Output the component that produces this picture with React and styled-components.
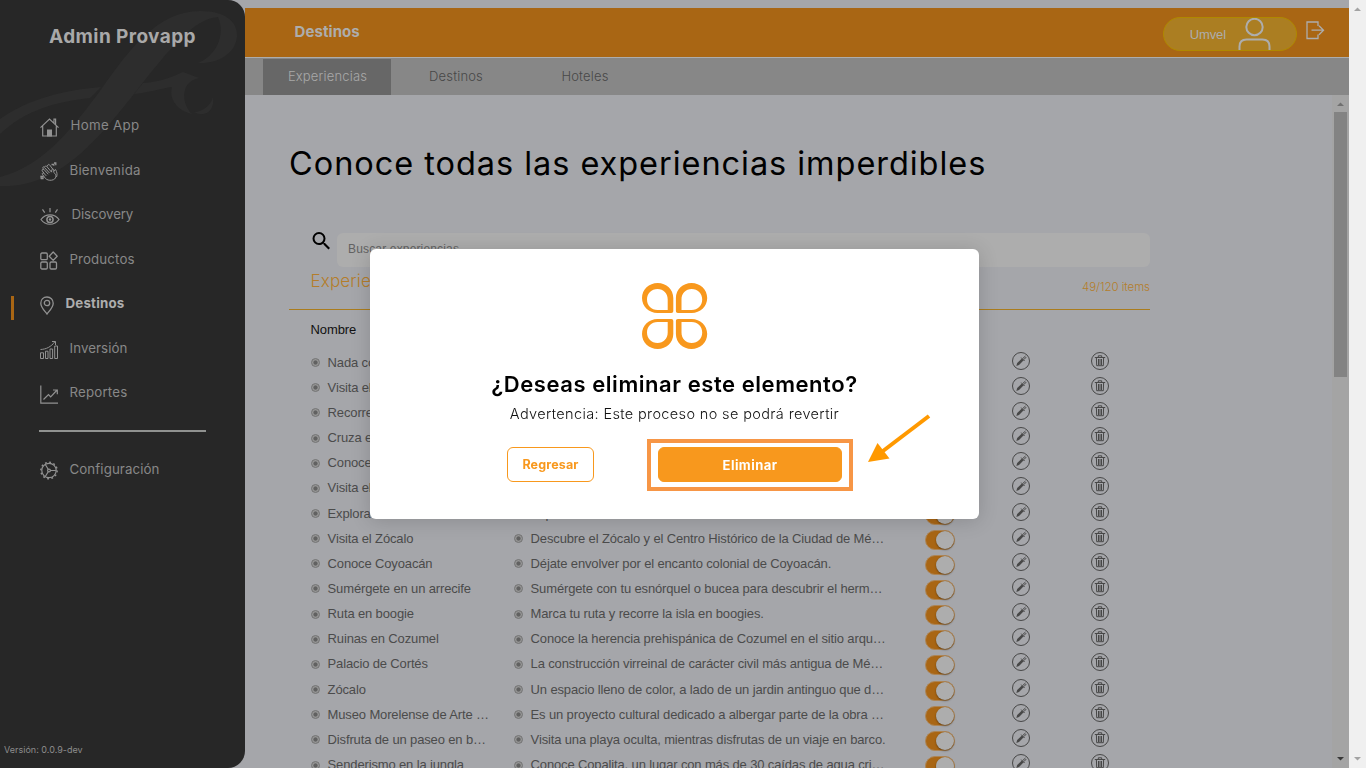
import React from "react";
import styled, { createGlobalStyle } from "styled-components";


// Global styles
//
//
//

const GlobalStyle = createGlobalStyle`
  * {
    box-sizing: border-box;
  }
  body {
    margin: 0;
    background-color: #a5a6aa;
    overflow: hidden;
    font-family: "Inter", "Open Sans", sans-serif;
  }
  svg {
    display: block;
    flex-shrink: 0;
  }
`;

// Layout
//
//
//

const Page = styled.div`
  display: flex;
  width: 1366px;
  height: 768px;
  background-color: #a5a6aa;
`;

const Main = styled.main`
  display: flex;
  flex-direction: column;
  width: 1104px;
  padding-top: 8px;
`;

const Body = styled.div`
  display: flex;
  flex: 1;
  min-height: 0;
`;

const Content = styled.section`
  width: 1087px;
  padding: 0 182px 0 44px;
  overflow: hidden;
`;

// Sidebar
//
//
//

const Sidebar = styled.aside`
  position: relative;
  display: flex;
  flex-direction: column;
  width: 245px;
  height: 768px;
  border-radius: 0 17px 17px 0;
  background-color: #272727;
  overflow: hidden;
`;

const Watermark = styled.svg`
  position: absolute;
  top: 0;
  left: 0;
  fill: #2d2d2d;
`;

const Brand = styled.h1`
  position: relative;
  margin: 0;
  padding-top: 25px;
  height: 103px;
  text-align: center;
  font-size: 19px;
  line-height: 24px;
  font-weight: 700;
  letter-spacing: 0.4px;
  color: #a9a9a9;
`;

const NavItem = styled.a`
  position: relative;
  display: flex;
  align-items: center;
  gap: 12px;
  height: 44.5px;
  padding-left: 39.5px;
  font-size: 13.3px;
  font-weight: ${({ $active }) => ($active ? 700 : 400)};
  letter-spacing: ${({ $spacing }) => $spacing}px;
  color: ${({ $active }) => ($active ? "#adadad" : "#888")};

  svg {
    margin-top: 4px;
  }
`;

const ActiveMark = styled.i`
  position: absolute;
  left: 11px;
  top: 15px;
  width: 3px;
  height: 24px;
  background-color: #a96614;
`;

const Divider = styled.hr`
  width: 167px;
  height: 2px;
  margin: 15px 0 15px 39px;
  border: 0;
  background-color: #909290;
`;

const Version = styled.small`
  margin-top: auto;
  padding: 0 0 12px 4px;
  font-size: 9px;
  line-height: 13px;
  letter-spacing: 0.02px;
  color: #8d8d8d;
`;

// Header
//
//
//

const TopBar = styled.header`
  display: flex;
  align-items: flex-start;
  height: 50px;
  padding: 9px 24px 0 49.5px;
  border-bottom: 1px solid #adadad;
  background-color: #a96614;

  h2 {
    flex: 1;
    margin: 5px 0 0;
    font-size: 15px;
    line-height: 20px;
    font-weight: 700;
    letter-spacing: 0.08px;
    color: #adadad;
  }
`;

const UserPill = styled.div`
  display: flex;
  justify-content: flex-end;
  width: 134px;
  height: 34px;
  padding-right: 25px;
  border: 1px solid #b08800;
  border-radius: 17px;
  background-color: #ab7e22;
  font-family: "Liberation Sans", sans-serif;
  font-size: 13px;
  line-height: 33px;
  letter-spacing: -0.1px;
  color: #adadad;

  svg {
    margin-left: 12px;
  }
`;

const Logout = styled.svg`
  margin: 4px 0 0 9px;
`;

const Tabs = styled.nav`
  display: flex;
  height: 37px;
  padding: 1px 0 0 18px;
  background-color: #878787;
`;

const Tab = styled.a`
  width: ${({ $active }) => ($active ? 128 : 129)}px;
  padding-left: 1px;
  line-height: 35px;
  text-align: center;
  font-size: 13px;
  font-weight: 300;
  letter-spacing: 0.17px;
  color: ${({ $active }) => ($active ? "#a9a9a9" : "#474747")};
  background-color: ${({ $active }) => ($active ? "#676767" : "transparent")};
`;

// Listing
//
//
//

const Title = styled.h2`
  margin: 44px 0 0;
  height: 94px;
  font-size: 32.5px;
  line-height: 50px;
  font-weight: 400;
  letter-spacing: 0.95px;
  white-space: nowrap;
  color: #000;
`;

const Search = styled.div`
  display: flex;
  height: 34px;
  padding-left: 20px;
`;

const SearchInput = styled.div`
  flex: 1;
  margin-left: 4px;
  padding-left: 11px;
  border-radius: 6px;
  background-color: #adadad;
  font-family: "Liberation Sans", sans-serif;
  font-size: 12px;
  line-height: 33px;
  letter-spacing: 0.16px;
  color: #626262;
`;

const ListHeader = styled.div`
  display: flex;
  justify-content: space-between;
  height: 43px;
  padding-left: 21.5px;
  border-bottom: 1px solid #aa7c1d;
  color: #b47d2b;
  font-weight: 300;

  h3 {
    margin: 0;
    font-size: 17px;
    line-height: 29px;
    font-weight: 300;
    letter-spacing: 0.15px;
  }
  span {
    font-size: 11.5px;
    line-height: 40px;
    letter-spacing: -0.06px;
  }
`;

const ColumnName = styled.div`
  height: 40px;
  padding-left: 21.5px;
  font-family: "Liberation Sans", sans-serif;
  font-size: 13px;
  line-height: 39px;
  letter-spacing: -0.1px;
  color: #111;
`;

const Row = styled.div`
  display: grid;
  grid-template-columns: 203px 411px 87px 79px 1fr;
  align-items: center;
  height: 25.17px;
  padding-left: 22px;
`;

const Cell = styled.div`
  display: flex;
  align-items: center;
  gap: 7.6px;
  font-family: "Liberation Sans", sans-serif;
  font-size: 13px;
  line-height: 20px;
  letter-spacing: -0.14px;
  white-space: nowrap;
  color: #4b4b4b;
`;

const Bullet = styled.i`
  width: 9px;
  height: 9px;
  border: 1px solid #727272;
  border-radius: 50%;
  background: radial-gradient(circle, #616161 0 1.7px, #959595 2.5px);
`;

const Toggle = styled.div`
  display: flex;
  justify-content: flex-end;
  width: 30px;
  height: 20px;
  margin-top: 2px;
  border: 1px solid #ad8555;
  border-radius: 10px;
  background-color: #a96614;

  i {
    width: 18px;
    height: 18px;
    border-radius: 50%;
    background-color: #adadad;
    box-shadow: 0 1px 2px rgba(0, 0, 0, 0.4);
  }
`;

const ActionIcon = styled.svg`
  margin-top: -4px;
`;

// Scrollbars
//
//
//

const Track = styled.div`
  display: flex;
  flex-direction: column;
  align-items: center;
  width: 17px;
  background-color: ${({ $color }) => $color};
`;

const Thumb = styled.div`
  width: 13px;
  height: 265px;
  background-color: #838383;
`;

const Arrow = styled.svg`
  margin-top: ${({ $end }) => ($end ? "auto" : 0)};
  transform: ${({ $end }) => ($end ? "rotate(180deg)" : "none")};
`;

// Modal
//
//
//

const Overlay = styled.div`
  position: fixed;
  top: 0;
  left: 0;
  display: flex;
  align-items: center;
  justify-content: center;
  width: 1349px;
  height: 768px;
`;

const Modal = styled.div`
  position: relative;
  display: flex;
  flex-direction: column;
  align-items: center;
  width: 609px;
  height: 270px;
  padding-top: 34px;
  border-radius: 6px;
  background-color: #fff;
  box-shadow: 0 2px 20px rgba(0, 0, 0, 0.16);

  h3 {
    margin: 21px 0 0;
    font-size: 22px;
    line-height: 28px;
    font-weight: 600;
    letter-spacing: 0.56px;
    color: #000;
  }
  p {
    margin: 6px 0 0;
    font-size: 14.5px;
    line-height: 20px;
    font-weight: 300;
    letter-spacing: 0.36px;
    color: #111;
  }
`;

const Actions = styled.div`
  display: flex;
  align-items: flex-start;
  align-self: flex-start;
  gap: 53px;
  margin: 15px 0 0 137px;
`;

const Button = styled.button`
  width: ${({ $primary }) => ($primary ? 184 : 87)}px;
  height: 35px;
  margin-top: ${({ $primary }) => ($primary ? 0 : 8)}px;
  padding: 0;
  border: 1px solid #f8981d;
  border-radius: 6px;
  background-color: ${({ $primary }) => ($primary ? "#f8981d" : "#fff")};
  font-family: inherit;
  font-size: ${({ $primary }) => ($primary ? 13 : 12.5)}px;
  font-weight: 700;
  letter-spacing: ${({ $primary }) => ($primary ? 0.45 : 0.15)}px;
  color: ${({ $primary }) => ($primary ? "#fff" : "#f8981d")};
`;

const Highlight = styled.div`
  padding: 4px 7px 5px;
  border: 4px solid #f79646;
  line-height: 0;
`;

const Pointer = styled.svg`
  position: absolute;
  left: 494px;
  top: 162px;
`;

// Icons
//
//
//

const line = { fill: "none", stroke: "#929292", strokeWidth: 1.2 };

const HomeIcon = () => (
  <svg width="19" height="19" {...line}>
    <path d="M.5 9.6 9.5 1l9 8.6M2.700 8.300v9.700h13.600v-9.700M14 5V1.200h1.600v5.300" />
    <path d="M7 18.500v-7h5v7z" fill="#929292" stroke="none" />
  </svg>
);

const ClapIcon = () => (
  <svg width="18" height="19" {...line} strokeWidth="1">
    <path d="M5.500 16.500 2.500 12.500c-.8-1.300.6-2.100 1.500-1.300L2.200 8.800c-.7-1.200.8-2 1.600-1.200L3 6.200c-.6-1.200.8-2 1.600-1.100L5 4.500c.4-.8 1.200-.7 1.700-.1l4.800 5.700.3-2.100c.2-1.300 2-1.200 2 0v2.500c3 2 3.200 7-2.300 7.700-2.400.3-4.500-.3-6-1.700z" />
    <path d="m4 7.500 4.200 4.700M4.500 5.500 9.500 11M3.700 11l2.500 2.800M7 4.500l1-1.700c.6-.7 1.300-.3 1.700.2l3 4M13.800 9l1.700-1.500c1.500 2.500 2 5 1 7.500" />
    <path d="M11.500 2.500h2.300v1.300M14 1h1.800v2.300M1 14.500h2v2H1.200z" strokeWidth="1.300" />
  </svg>
);

const EyeIcon = () => (
  <svg width="20" height="19" {...line}>
    <path d="M1 12.500C5.500 6.300 14.500 6.300 19 12.500 14.500 18.800 5.500 18.800 1 12.500Z" />
    <circle cx="10" cy="12.500" r="3.100" strokeWidth="1.500" />
    <circle cx="10" cy="12.500" r=".7" />
    <path d="M10 1v4.300M2.500 2.400l2.200 3.200M17.500 2.400l-2.200 3.200" />
  </svg>
);

const GridIcon = () => (
  <svg width="18" height="19" {...line} strokeWidth="1.300">
    <rect x=".8" y="2" width="6.500" height="6.700" rx="1.200" />
    <rect x=".8" y="11" width="6.500" height="7" rx="1.200" />
    <rect x="10" y="11" width="6.500" height="7" rx="1.200" />
    <path d="m13.200 1 4 4.200-4 4.200-4-4.200z" strokeLinejoin="round" />
  </svg>
);

const PinIcon = () => (
  <svg width="14" height="19" {...line} strokeWidth="1.300">
    <path d="M7 18C4.500 14.800.8 11.300.8 7.200.8 3.500 3.500 1 7 1s6.200 2.500 6.200 6.200C13.200 11.300 9.500 14.800 7 18Z" />
    <circle cx="7" cy="7" r="2.700" />
  </svg>
);

const BarsIcon = () => (
  <svg width="18" height="19" {...line} strokeWidth="1">
    <path d="M.5 18.500v-5.700h3v5.700zM5.500 18.500v-7.300h2.500v7.300zM10 18.500v-9.500h2.600v9.500zM14.700 18.500v-12.500h2.800v12.500z" />
    <path d="M.5 9.500C6 9.300 11 7 15 1.600M12 1.500h3.500V5" />
  </svg>
);

const ChartIcon = () => (
  <svg width="18" height="19" {...line}>
    <path d="M.8.500v17.700H18M3.500 14.500l5-5 2.200 2.300L16.600 5.500M13 5h4.300v4.300" />
  </svg>
);

const GearIcon = () => (
  <svg width="18" height="19" {...line}>
    <circle cx="9" cy="9.500" r="7.200" />
    <circle cx="9" cy="9.500" r="8.200" strokeWidth="1.400" strokeDasharray="1.800 2.490" />
    <circle cx="9" cy="9.500" r="1.400" />
    <path d="M10.400 9.500h5.500M8.200 8.300 5.300 3.500M8.200 10.700l-2.900 4.800" />
  </svg>
);

const EditIcon = () => (
  <ActionIcon width="18" height="18" fill="none" stroke="#474747">
    <circle cx="9" cy="9" r="8.500" />
    <path d="m4.300 13.900.9-2.800 4.700-4.700 1.800 1.800L7 13z" fill="#474747" stroke="none" />
    <path d="m9.200 5.600 3.400 3.400M10.700 6.500l2.800-2.500M12 7.500l2.200-2.400" />
  </ActionIcon>
);

const TrashIcon = () => (
  <ActionIcon width="18" height="18" fill="none" stroke="#474747">
    <circle cx="9" cy="9" r="8.500" />
    <path d="M3.800 5.500h10.400M7.300 5V3.800h3.400V5M5.400 6l.3 7.700h6.600l.3-7.700M7.500 7v6M9 7v6M10.500 7v6" />
  </ActionIcon>
);

const petal =
  "M29.300 30H15.500C7 30 0 23.500 0 15 0 6.500 7 0 15.700 0S31.300 6.500 31.300 15v13c0 1.200-.8 2-2 2ZM25.700 27V16.500C25.700 10.500 21.500 6 15.500 6S5 10.500 5 16.500 9.500 27 15.500 27Z";

const Clover = () => (
  <svg width="66" height="66" fill="#f8981d" fillRule="evenodd">
    <path d={petal} />
    <path d={petal} transform="matrix(-1 0 0 1 65.200 0)" />
    <path d={petal} transform="matrix(1 0 0 -1 0 66)" />
    <path d={petal} transform="matrix(-1 0 0 -1 65.200 66)" />
  </svg>
);

const ScrollArrow = ({ color, end }) => (
  <Arrow $end={end} width="17" height="17">
    <path d="M5 11h7L8.500 7.500z" fill={color} />
  </Arrow>
);

// Data
//
//
//

const navItems = [
  { label: "Home App", icon: <HomeIcon />, spacing: 0.32 },
  { label: "Bienvenida", icon: <ClapIcon />, spacing: 0.22 },
  { label: "Discovery", icon: <EyeIcon />, spacing: -0.12 },
  { label: "Productos", icon: <GridIcon />, spacing: 0.12 },
  { label: "Destinos", icon: <PinIcon />, spacing: 0.2, active: true },
  { label: "Inversión", icon: <BarsIcon />, spacing: 0.08 },
  { label: "Reportes", icon: <ChartIcon />, spacing: 0.18 },
];

const experiences = [
  ["Nada con tiburón ballena", "Vive una experiencia única en el mar."],
  ["Visita el acuario", "Conoce las especies marinas de la región."],
  ["Recorre Xochimilco", "Pasea en trajinera por los canales."],
  ["Cruza el puente", "Atrévete a cruzar el puente colgante."],
  ["Conoce el Castillo", "Recorre las salas del castillo."],
  ["Visita el museo", "Descubre las colecciones del museo."],
  ["Explora la ciudad", "Explora la ciudad a tu ritmo."],
  ["Visita el Zócalo", "Descubre el Zócalo y el Centro Histórico de la Ciudad de Mé…"],
  ["Conoce Coyoacán", "Déjate envolver por el encanto colonial de Coyoacán."],
  ["Sumérgete en un arrecife", "Sumérgete con tu esnórquel o bucea para descubrir el herm…"],
  ["Ruta en boogie", "Marca tu ruta y recorre la isla en boogies."],
  ["Ruinas en Cozumel", "Conoce la herencia prehispánica de Cozumel en el sitio arqu…"],
  ["Palacio de Cortés", "La construcción virreinal de carácter civil más antigua de Mé…"],
  ["Zócalo", "Un espacio lleno de color, a lado de un jardin antinguo que d…"],
  ["Museo Morelense de Arte …", "Es un proyecto cultural dedicado a albergar parte de la obra …"],
  ["Disfruta de un paseo en b…", "Visita una playa oculta, mientras disfrutas de un viaje en barco."],
  ["Senderismo en la jungla", "Conoce Copalita, un lugar con más de 30 caídas de agua cri…"],
];

// Component declaration
//
//
//

export default function App() {
  return (
    <Page>
      <GlobalStyle />
      <Sidebar>
        <Watermark width="245" height="190">
          <path d="M0 177C45 165 72 128 100 91 130 48 158 11 200 11c26 0 38 11 37 26-2 17-19 27-39 26 18-7 28-28 20-46-25 2-49 33-77 68C101 136 60 189 0 186Z" />
          <path d="M0 119C28 99 64 90 101 87L90 98C55 102 26 110 0 134ZM143 83c17-1 29-6 40-11l16 6c-20 4-17 27-7 36-17-4-23-17-20-27-13 2-25 6-38 7ZM194 112c9 0 17-7 19-15 2 14-8 21-19 15Z" />
        </Watermark>
        <Brand>Admin Provapp</Brand>
        {navItems.map(({ label, icon, spacing, active }) => (
          <NavItem key={label} $active={active} $spacing={spacing}>
            {active && <ActiveMark />}
            {icon}
            {label}
          </NavItem>
        ))}
        <Divider />
        <NavItem $spacing={0.09}>
          <GearIcon />
          Configuración
        </NavItem>
        <Version>Versión: 0.0.9-dev</Version>
      </Sidebar>

      <Main>
        <TopBar>
          <h2>Destinos</h2>
          <UserPill>
            Umvel
            <svg width="33" height="33" fill="none" stroke="#adadad" strokeWidth="2">
              <circle cx="16.500" cy="9" r="8.200" />
              <path d="M1.500 32v-3.500q0-7 7-7h16q7 0 7 7V32" />
            </svg>
          </UserPill>
          <Logout width="19" height="19" fill="none" stroke="#adadad" strokeWidth="1.300">
            <path d="M12 5V1H1v16.500h11v-4M5.500 9.200H17.500M13 4.700l4.500 4.500-4.500 4.500" />
          </Logout>
        </TopBar>
        <Tabs>
          <Tab $active>Experiencias</Tab>
          <Tab>Destinos</Tab>
          <Tab>Hoteles</Tab>
        </Tabs>
        <Body>
          <Content>
            <Title>Conoce todas las experiencias imperdibles</Title>
            <Search>
              <svg width="24" height="24" viewBox="0 0 24 24" transform="translate(0.500 -4)">
                <path d="M15.500 14h-.79l-.28-.27A6.470 6.470 0 0 0 16 9.500 6.500 6.500 0 1 0 9.500 16c1.610 0 3.090-.59 4.230-1.570l.27.28v.79l5 4.990L20.490 19l-4.990-5zm-6 0C7.010 14 5 11.990 5 9.500S7.010 5 9.500 5 14 7.010 14 9.500 11.990 14 9.500 14z" />
              </svg>
              <SearchInput>Buscar experiencias</SearchInput>
            </Search>
            <ListHeader>
              <h3>Experiencias</h3>
              <span>49/120 items</span>
            </ListHeader>
            <ColumnName>Nombre</ColumnName>
            {experiences.map(([name, description]) => (
              <Row key={name}>
                <Cell>
                  <Bullet />
                  {name}
                </Cell>
                <Cell>
                  <Bullet />
                  {description}
                </Cell>
                <Toggle>
                  <i />
                </Toggle>
                <EditIcon />
                <TrashIcon />
              </Row>
            ))}
          </Content>
          <Track $color="#a4a4a4">
            <ScrollArrow color="#707070" />
            <Thumb />
            <ScrollArrow color="#383838" end />
          </Track>
        </Body>
      </Main>

      <Track $color="#f0f0f0">
        <ScrollArrow color="#a3a3a3" />
        <ScrollArrow color="#a3a3a3" end />
      </Track>

      <Overlay>
        <Modal>
          <Clover />
          <h3>¿Deseas eliminar este elemento?</h3>
          <p>Advertencia: Este proceso no se podrá revertir</p>
          <Actions>
            <Button>Regresar</Button>
            <Highlight>
              <Button $primary>Eliminar</Button>
            </Highlight>
          </Actions>
          <Pointer width="70" height="56" fill="#f90">
            <path d="M65 5 19 40" stroke="#f90" strokeWidth="4" />
            <path d="m4 51 9.500-19 12 15.500z" />
          </Pointer>
        </Modal>
      </Overlay>
    </Page>
  );
}
